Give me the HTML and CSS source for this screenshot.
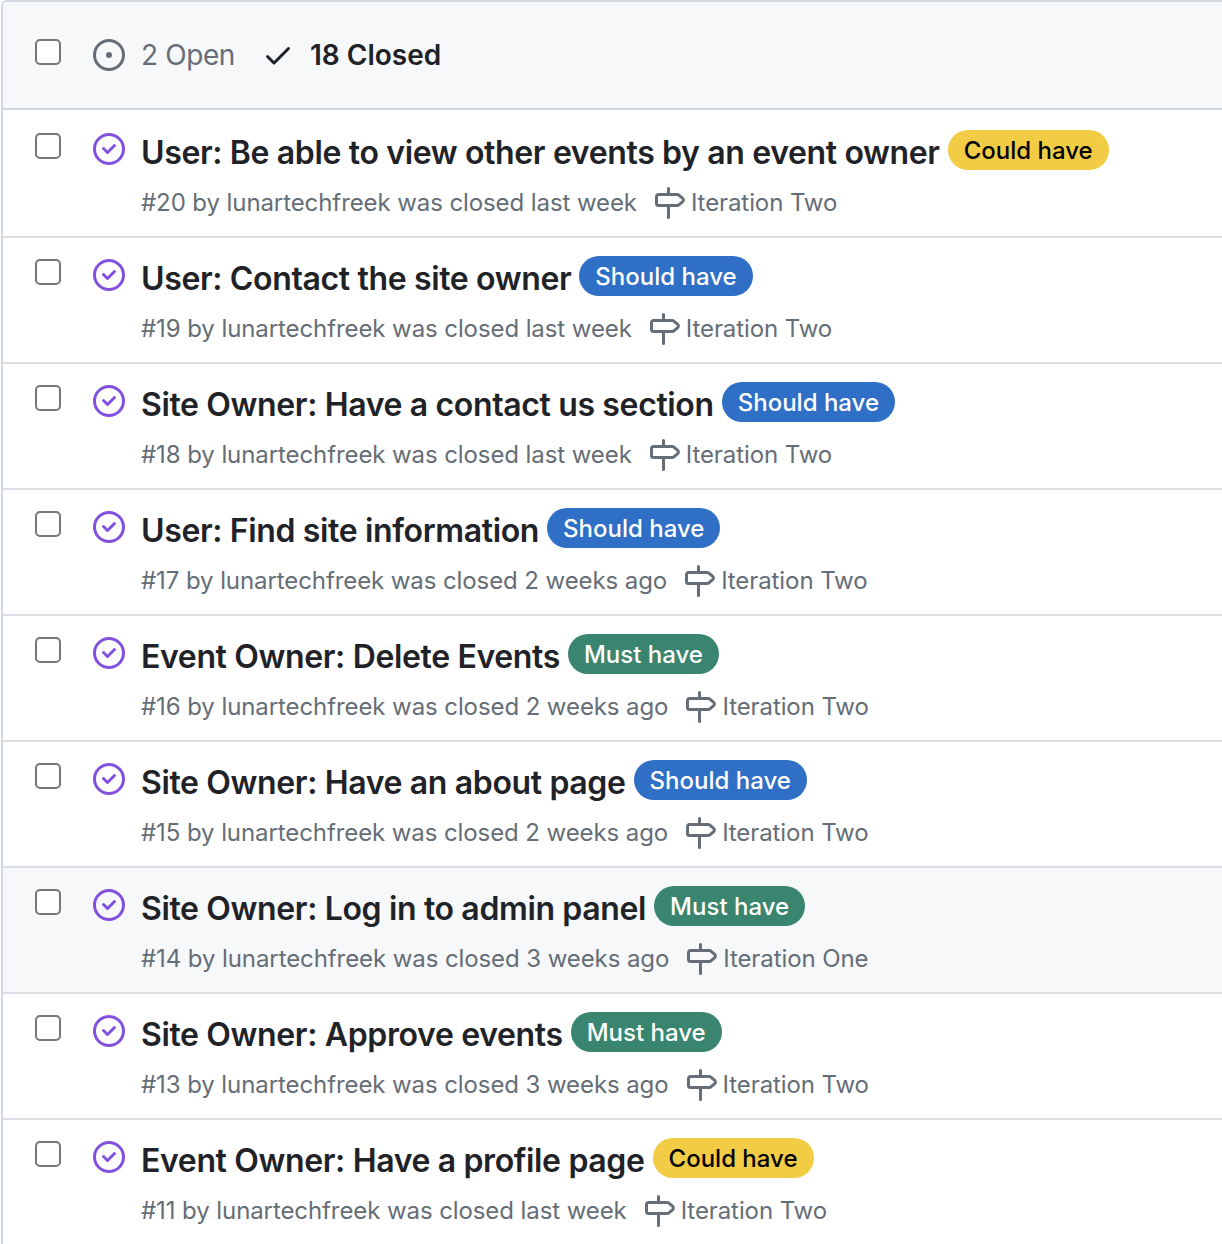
FILE: index.html
```html
<!DOCTYPE html>
<html lang="en">
<head>
  <meta charset="UTF-8">
  <title>Issues</title>
  <link rel="stylesheet" href="styles.css">
</head>
<body>
  <svg class="sprites" width="0" height="0">
    <symbol id="issue-opened" viewBox="0 0 16 16"><path d="M8 9.5a1.5 1.5 0 1 0 0-3 1.5 1.5 0 0 0 0 3Z"/><path d="M8 0a8 8 0 1 1 0 16A8 8 0 0 1 8 0ZM1.5 8a6.5 6.5 0 1 0 13 0 6.5 6.5 0 0 0-13 0Z"/></symbol>
    <symbol id="check" viewBox="0 0 16 16"><path d="M13.78 4.22a.75.75 0 0 1 0 1.06l-7.25 7.25a.75.75 0 0 1-1.06 0L2.22 9.28a.751.751 0 0 1 .018-1.042.751.751 0 0 1 1.042-.018L6 10.94l6.72-6.72a.75.75 0 0 1 1.06 0Z"/></symbol>
    <symbol id="issue-closed" viewBox="0 0 16 16"><path d="M11.28 6.78a.75.75 0 0 0-1.06-1.06L7.25 8.69 5.78 7.22a.75.75 0 0 0-1.06 1.06l2 2a.75.75 0 0 0 1.06 0l3.5-3.5Z"/><path d="M16 8A8 8 0 1 1 0 8a8 8 0 0 1 16 0Zm-1.5 0a6.5 6.5 0 1 0-13 0 6.5 6.5 0 0 0 13 0Z"/></symbol>
    <symbol id="milestone" viewBox="0 0 16 16"><path d="M7.75 0a.75.75 0 0 1 .75.75V3h3.634c.414 0 .814.147 1.13.414l2.07 1.75a1.75 1.75 0 0 1 0 2.672l-2.07 1.75a1.75 1.75 0 0 1-1.13.414H8.5v5.25a.75.75 0 0 1-1.5 0V10H2.75A1.75 1.75 0 0 1 1 8.25v-3.5C1 3.784 1.784 3 2.75 3H7V.75A.75.75 0 0 1 7.75 0Zm4.384 8.5a.25.25 0 0 0 .161-.06l2.07-1.75a.25.25 0 0 0 0-.38l-2.07-1.75a.25.25 0 0 0-.161-.06H2.75a.25.25 0 0 0-.25.25v3.5c0 .138.112.25.25.25h9.384Z"/></symbol>
  </svg>

  <div class="box">
    <div class="box-header">
      <span class="checkbox"></span>
      <svg class="icon icon-open"><use href="#issue-opened"/></svg>
      <span class="tab-open">2 Open</span>
      <svg class="icon-check"><use href="#check"/></svg>
      <span class="tab-closed">18 Closed</span>
    </div>

    <div class="row">
      <span class="checkbox"></span>
      <svg class="icon icon-closed"><use href="#issue-closed"/></svg>
      <div class="row-body">
        <div class="row-title"><span class="title">User: Be able to view other events by an event owner</span><span class="label could">Could have</span></div>
        <div class="row-meta"><span>#20 by lunartechfreek was closed last week</span><svg class="icon-milestone"><use href="#milestone"/></svg><span>Iteration Two</span></div>
      </div>
    </div>

    <div class="row">
      <span class="checkbox"></span>
      <svg class="icon icon-closed"><use href="#issue-closed"/></svg>
      <div class="row-body">
        <div class="row-title"><span class="title">User: Contact the site owner</span><span class="label should">Should have</span></div>
        <div class="row-meta"><span>#19 by lunartechfreek was closed last week</span><svg class="icon-milestone"><use href="#milestone"/></svg><span>Iteration Two</span></div>
      </div>
    </div>

    <div class="row">
      <span class="checkbox"></span>
      <svg class="icon icon-closed"><use href="#issue-closed"/></svg>
      <div class="row-body">
        <div class="row-title"><span class="title">Site Owner: Have a contact us section</span><span class="label should">Should have</span></div>
        <div class="row-meta"><span>#18 by lunartechfreek was closed last week</span><svg class="icon-milestone"><use href="#milestone"/></svg><span>Iteration Two</span></div>
      </div>
    </div>

    <div class="row">
      <span class="checkbox"></span>
      <svg class="icon icon-closed"><use href="#issue-closed"/></svg>
      <div class="row-body">
        <div class="row-title"><span class="title">User: Find site information</span><span class="label should">Should have</span></div>
        <div class="row-meta"><span>#17 by lunartechfreek was closed 2 weeks ago</span><svg class="icon-milestone"><use href="#milestone"/></svg><span>Iteration Two</span></div>
      </div>
    </div>

    <div class="row">
      <span class="checkbox"></span>
      <svg class="icon icon-closed"><use href="#issue-closed"/></svg>
      <div class="row-body">
        <div class="row-title"><span class="title">Event Owner: Delete Events</span><span class="label must">Must have</span></div>
        <div class="row-meta"><span>#16 by lunartechfreek was closed 2 weeks ago</span><svg class="icon-milestone"><use href="#milestone"/></svg><span>Iteration Two</span></div>
      </div>
    </div>

    <div class="row">
      <span class="checkbox"></span>
      <svg class="icon icon-closed"><use href="#issue-closed"/></svg>
      <div class="row-body">
        <div class="row-title"><span class="title">Site Owner: Have an about page</span><span class="label should">Should have</span></div>
        <div class="row-meta"><span>#15 by lunartechfreek was closed 2 weeks ago</span><svg class="icon-milestone"><use href="#milestone"/></svg><span>Iteration Two</span></div>
      </div>
    </div>

    <div class="row row-hover">
      <span class="checkbox"></span>
      <svg class="icon icon-closed"><use href="#issue-closed"/></svg>
      <div class="row-body">
        <div class="row-title"><span class="title">Site Owner: Log in to admin panel</span><span class="label must">Must have</span></div>
        <div class="row-meta"><span>#14 by lunartechfreek was closed 3 weeks ago</span><svg class="icon-milestone"><use href="#milestone"/></svg><span>Iteration One</span></div>
      </div>
    </div>

    <div class="row">
      <span class="checkbox"></span>
      <svg class="icon icon-closed"><use href="#issue-closed"/></svg>
      <div class="row-body">
        <div class="row-title"><span class="title">Site Owner: Approve events</span><span class="label must">Must have</span></div>
        <div class="row-meta"><span>#13 by lunartechfreek was closed 3 weeks ago</span><svg class="icon-milestone"><use href="#milestone"/></svg><span>Iteration Two</span></div>
      </div>
    </div>

    <div class="row">
      <span class="checkbox"></span>
      <svg class="icon icon-closed"><use href="#issue-closed"/></svg>
      <div class="row-body">
        <div class="row-title"><span class="title">Event Owner: Have a profile page</span><span class="label could">Could have</span></div>
        <div class="row-meta"><span>#11 by lunartechfreek was closed last week</span><svg class="icon-milestone"><use href="#milestone"/></svg><span>Iteration Two</span></div>
      </div>
    </div>
  </div>
</body>
</html>
```

FILE: styles.css
```css
html, body {
  margin: 0;
  height: 100%;
  overflow: hidden;
}

body {
  font-family: Inter, "Liberation Sans", sans-serif;
  background: #fff;
  color: #1f2328;
}

.sprites {
  display: block;
  height: 0;
}

.box {
  margin-left: 1px;
  border-left: 2px solid #d0d7de;
  border-top: 2px solid #d0d7de;
  border-top-left-radius: 6px;
}

.box-header {
  display: flex;
  align-items: center;
  height: 106px;
  padding-left: 32px;
  background: #f6f8fa;
  border-bottom: 2px solid #d0d7de;
  border-top-left-radius: 6px;
}

.box-header .checkbox {
  margin-top: -6px;
}

.checkbox {
  flex: none;
  box-sizing: border-box;
  width: 26px;
  height: 26px;
  background: #fff;
  border: 2px solid #767676;
  border-radius: 5px;
}

.icon {
  flex: none;
  width: 32px;
  height: 32px;
  margin-left: 32px;
}

.icon-open {
  fill: #656d76;
}

.icon-closed {
  fill: #8250df;
}

.tab-open {
  margin-left: 16px;
  font-size: 28px;
  letter-spacing: -0.4px;
  color: #656d76;
}

.icon-check {
  width: 32px;
  height: 32px;
  margin-left: 27px;
  fill: #1f2328;
}

.tab-closed {
  margin-left: 16px;
  font-size: 28px;
  font-weight: 600;
}

.row {
  display: flex;
  align-items: flex-start;
  box-sizing: border-box;
  height: 126px;
  padding: 21px 0 0 32px;
  border-bottom: 2px solid #d8dee4;
}

.box-header + .row {
  height: 128px;
  padding-top: 23px;
}

.row-hover {
  background: #f6f8fa;
}

.row-body {
  margin-left: 16px;
  min-width: 0;
}

.row-title {
  display: flex;
  align-items: flex-start;
  gap: 8px;
  height: 40px;
  margin-top: -3px;
}

.title {
  font-size: 32px;
  font-weight: 600;
  line-height: 46px;
  letter-spacing: -0.36px;
  white-space: nowrap;
}

.label {
  height: 40px;
  padding: 0 16px;
  font-size: 24px;
  font-weight: 500;
  line-height: 42px;
  border-radius: 20px;
  white-space: nowrap;
}

.could {
  background: #f3cc45;
  color: #000;
}

.should {
  background: #2f70c6;
  color: #fff;
}

.must {
  background: #3a8570;
  color: #fff;
}

.row-meta {
  display: flex;
  align-items: center;
  margin-top: 15px;
  font-size: 24px;
  line-height: 36px;
  letter-spacing: -0.09px;
  color: #656d76;
  white-space: nowrap;
}

.icon-milestone {
  flex: none;
  width: 32px;
  height: 32px;
  margin: 0 6px 0 16px;
  fill: #656d76;
}
```
